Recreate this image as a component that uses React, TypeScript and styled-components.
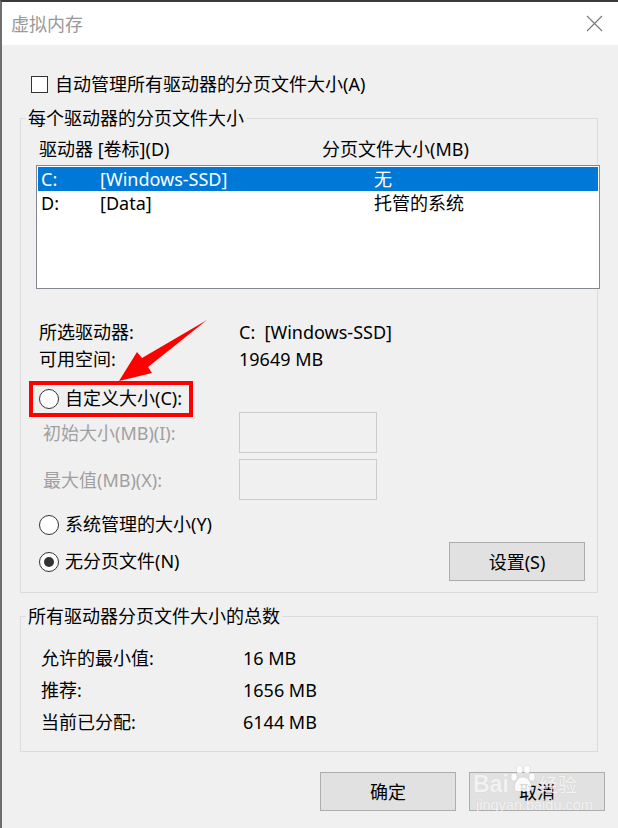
import React from "react";
import styled, { createGlobalStyle } from "styled-components";

const Global = createGlobalStyle`
  html, body { margin: 0; padding: 0; background: #f0f0f0; }
  body { font-family: "Noto Sans", "Noto Sans CJK SC", sans-serif; }
  * { box-sizing: border-box; }
`;

const Window = styled.div`
  position: relative;
  width: 618px;
  height: 828px;
  border-top: 2px solid #3a3a3a;
  border-left: 2px solid #6e6e6e;
  background: #f0f0f0;
  display: flex;
  flex-direction: column;
  font-size: 18px;
  color: #000;
  overflow: hidden;
`;

const TitleBar = styled.div`
  height: 43px;
  flex: none;
  background: #fff;
  display: flex;
  align-items: center;
  justify-content: space-between;
  padding: 0 15px 0 9px;
`;

const Title = styled.div`
  color: #999;
  font-size: 18px;
  line-height: 24px;
`;

const CloseIcon = styled.svg`
  width: 17px;
  height: 17px;
  display: block;
`;

const CheckRow = styled.label`
  display: flex;
  align-items: center;
  gap: 7px;
  height: 24px;
  line-height: 24px;
  margin: 27px 0 0 29px;
`;

const CheckBox = styled.span`
  width: 17px;
  height: 17px;
  border: 1px solid #333;
  background: #fff;
  display: block;
`;

const Group = styled.fieldset<{ $padBottom: number; $top: number }>`
  margin: ${(p) => p.$top}px 0 0 18px;
  width: 578px;
  min-width: 0;
  border: 1px solid #dcdcdc;
  padding: 0 0 ${(p) => p.$padBottom}px 0;
`;

const Legend = styled.legend`
  margin-left: 5px;
  padding: 0 2px;
  line-height: 22px;
  font-size: 18px;
`;

const HeaderRow = styled.div`
  display: grid;
  grid-template-columns: 283px 1fr;
  margin: 8px 0 0 18px;
  line-height: 24px;
`;

const ListBox = styled.div`
  margin: 4px 0 0 15px;
  width: 564px;
  height: 124px;
  border: 1px solid #828790;
  background: #fff;
  padding: 1px;
`;

const ListRow = styled.div<{ $selected?: boolean }>`
  display: grid;
  grid-template-columns: 59px 274px 1fr;
  height: 24px;
  line-height: 24px;
  padding-left: 3px;
  background: ${(p) => (p.$selected ? "#0078d7" : "transparent")};
  color: ${(p) => (p.$selected ? "#fff" : "#000")};
  white-space: pre;
`;

const InfoGrid = styled.div<{ $top: number; $left: number; $col: number; $lh: number }>`
  display: grid;
  grid-template-columns: ${(p) => p.$col}px 1fr;
  margin: ${(p) => p.$top}px 0 0 ${(p) => p.$left}px;
  line-height: ${(p) => p.$lh}px;
  white-space: pre;
`;

const RadioRow = styled.label<{ $top: number }>`
  position: relative;
  display: flex;
  align-items: center;
  gap: 6px;
  height: 27px;
  line-height: 27px;
  margin: ${(p) => p.$top}px 0 0 18px;
`;

const Radio = styled.span<{ $checked?: boolean }>`
  width: 20px;
  height: 20px;
  border-radius: 50%;
  border: 1px solid #333;
  background: #fff;
  display: flex;
  align-items: center;
  justify-content: center;
  flex: none;
  &::after {
    content: "";
    display: ${(p) => (p.$checked ? "block" : "none")};
    width: 10px;
    height: 10px;
    border-radius: 50%;
    background: #333;
  }
`;

const Highlight = styled.span`
  position: absolute;
  left: -10px;
  top: -4px;
  width: 164px;
  height: 36px;
  border: 4px solid #ff0000;
  pointer-events: none;
`;

const InputRow = styled.div<{ $top: number }>`
  display: flex;
  align-items: center;
  height: 41px;
  margin: ${(p) => p.$top}px 0 0 22px;
`;

const DisabledLabel = styled.span`
  width: 196px;
  color: #a0a0a0;
  line-height: 24px;
`;

const DisabledInput = styled.div`
  width: 138px;
  height: 41px;
  border: 1px solid #cccccc;
  background: #f0f0f0;
`;

const BottomRow = styled.div`
  display: flex;
  align-items: center;
  justify-content: space-between;
  height: 39px;
  margin: 4px 12px 0 18px;
`;

const Button = styled.button`
  width: 136px;
  height: 39px;
  background: #e1e1e1;
  border: 1px solid #adadad;
  font-family: inherit;
  font-size: 18px;
  color: #000;
  padding: 0;
  line-height: 24px;
`;

const DialogButtons = styled.div`
  display: flex;
  justify-content: flex-end;
  gap: 13px;
  margin: 20px 13px 0 0;
`;

const Arrow = styled.svg`
  position: absolute;
  left: -2px;
  top: -2px;
  width: 618px;
  height: 828px;
  pointer-events: none;
`;

const Watermark = styled.div`
  position: absolute;
  left: 471px;
  top: 758px;
  pointer-events: none;
  color: rgba(255, 255, 255, 0.8);
  text-shadow: 0 0 1px rgba(0, 0, 0, 0.12);
  display: flex;
  flex-direction: column;
  align-items: flex-start;
`;

const WmTop = styled.div`
  display: flex;
  align-items: flex-end;
  height: 36px;
`;

const WmBai = styled.span`
  font-family: "Liberation Sans", sans-serif;
  font-weight: bold;
  font-size: 23px;
  line-height: 24px;
`;

const WmJy = styled.span`
  font-family: "Noto Sans CJK SC", sans-serif;
  font-size: 19px;
  line-height: 24px;
  margin-left: 2px;
`;

const WmUrl = styled.span`
  font-family: "Liberation Sans", sans-serif;
  font-size: 14.5px;
  line-height: 18px;
  margin-left: 3px;
`;

export default function App() {
  return (
    <>
      <Global />
      <Window>
        <TitleBar>
          <Title>虚拟内存</Title>
          <CloseIcon viewBox="0 0 17 17">
            <path d="M1 1 L16 16 M16 1 L1 16" stroke="#777" strokeWidth="1.1" fill="none" />
          </CloseIcon>
        </TitleBar>

        <CheckRow>
          <CheckBox />
          <span>自动管理所有驱动器的分页文件大小(A)</span>
        </CheckRow>

        <Group $top={11} $padBottom={11}>
          <Legend>每个驱动器的分页文件大小</Legend>
          <HeaderRow>
            <span>驱动器 [卷标](D)</span>
            <span>分页文件大小(MB)</span>
          </HeaderRow>
          <ListBox>
            <ListRow $selected>
              <span>C:</span>
              <span>[Windows-SSD]</span>
              <span>无</span>
            </ListRow>
            <ListRow>
              <span>D:</span>
              <span>[Data]</span>
              <span>托管的系统</span>
            </ListRow>
          </ListBox>

          <InfoGrid $top={30} $left={18} $col={200} $lh={27}>
            <span>所选驱动器:</span>
            <span>C:  [Windows-SSD]</span>
            <span>可用空间:</span>
            <span>19649 MB</span>
          </InfoGrid>

          <RadioRow $top={12}>
            <Radio />
            <span>自定义大小(C):</span>
            <Highlight />
          </RadioRow>

          <InputRow $top={0}>
            <DisabledLabel>初始大小(MB)(I):</DisabledLabel>
            <DisabledInput />
          </InputRow>
          <InputRow $top={6}>
            <DisabledLabel>最大值(MB)(X):</DisabledLabel>
            <DisabledInput />
          </InputRow>

          <RadioRow $top={11}>
            <Radio />
            <span>系统管理的大小(Y)</span>
          </RadioRow>

          <BottomRow>
            <RadioRow $top={0} style={{ marginLeft: 0 }}>
              <Radio $checked />
              <span>无分页文件(N)</span>
            </RadioRow>
            <Button>设置(S)</Button>
          </BottomRow>
        </Group>

        <Group $top={12} $padBottom={13}>
          <Legend>所有驱动器分页文件大小的总数</Legend>
          <InfoGrid $top={15} $left={20} $col={202} $lh={32}>
            <span>允许的最小值:</span>
            <span>16 MB</span>
            <span>推荐:</span>
            <span>1656 MB</span>
            <span>当前已分配:</span>
            <span>6144 MB</span>
          </InfoGrid>
        </Group>

        <DialogButtons>
          <Button>确定</Button>
          <Button>取消</Button>
        </DialogButtons>

        <Arrow viewBox="0 0 618 828">
          <polygon
            points="119,381 137,352 142,358 207,320 148,367 152,373"
            fill="#ff0000"
          />
        </Arrow>

        <Watermark>
          <WmTop>
            <WmBai>Bai</WmBai>
            <svg width="28" height="30" viewBox="0 0 28 30" style={{ marginBottom: 2 }}>
              <g fill="rgba(255,255,255,0.85)" stroke="rgba(0,0,0,0.1)" strokeWidth="0.8">
                <ellipse cx="5" cy="13" rx="3.2" ry="4" />
                <ellipse cx="10.5" cy="5.5" rx="3.2" ry="4.2" />
                <ellipse cx="18" cy="5.5" rx="3.2" ry="4.2" />
                <ellipse cx="23" cy="13" rx="3.2" ry="4" />
                <path d="M14 13 C8 13 4 21 6 26 C8 29 12 27 14 27 C16 27 20 29 22 26 C24 21 20 13 14 13 Z" />
              </g>
            </svg>
            <WmJy>经验</WmJy>
          </WmTop>
          <WmUrl>jingyan.baidu.com</WmUrl>
        </Watermark>
      </Window>
    </>
  );
}
